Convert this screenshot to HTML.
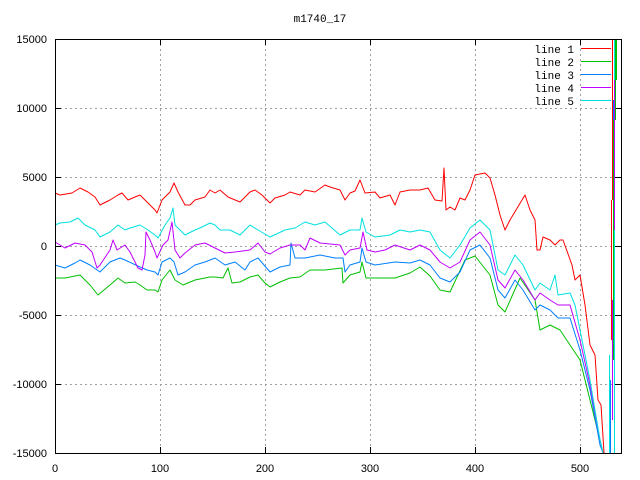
<!DOCTYPE html>
<html><head><meta charset="utf-8"><style>
html,body{margin:0;padding:0;background:#fff;}
svg{display:block}
text{font-family:"Liberation Sans",sans-serif;font-size:11px;fill:#000}
.m{font-family:"Liberation Mono",monospace;font-size:11px}
</style></head><body>
<svg width="640" height="480" viewBox="0 0 640 480" xmlns="http://www.w3.org/2000/svg">
<rect width="640" height="480" fill="#fff"/>
<g stroke="#a0a0a0" stroke-width="1" stroke-dasharray="2,3" fill="none">
<path d="M160.5 39V453M265.5 39V453M370.5 39V453M475.5 39V453M580.5 39V453"/>
<path d="M55 108.5H611M55 177.5H621M55 246.5H621M55 315.5H621M55 384.5H621"/>
</g>
<g stroke="#000" stroke-width="1">
<path d="M55 108.5h6M55 177.5h6M55 246.5h6M55 315.5h6M55 384.5h6M621 108.5h-6M621 177.5h-6M621 246.5h-6M621 315.5h-6M621 384.5h-6"/>
<path d="M160.5 453v-6M265.5 453v-6M370.5 453v-6M475.5 453v-6M580.5 453v-6M160.5 39v6M265.5 39v6M370.5 39v6M475.5 39v6M580.5 39v6"/>
</g>
<g fill="none" stroke-width="1" stroke-linejoin="round">
<polyline stroke="#00c000" points="55,278 65,278 80,275 90,285 98,295 110,285 118,278 125,283 135,282 140,285 147,290 155,290 158,292 162,280 170,270 175,280 183,285 195,280 210,277 215,277 223,278 228,268 232,283 240,282 250,277 258,275 265,283 270,287 280,282 290,278 300,277 310,270 325,270 342,268 343,283 350,275 360,272 362,262 366,278 375,278 395,278 410,273 420,267 430,276 440,290 450,292 465,260 475,256 490,275 498,305 505,312 520,278 535,300 540,330 550,325 560,330 570,345 580,360 590,400 600,440 603,453"/>
<polyline stroke="#0080ff" points="55,265 65,268 75,263 80,260 90,265 100,272 110,262 120,258 125,260 140,267 147,270 155,272 158,275 162,262 170,258 174,262 178,275 185,272 195,265 205,262 215,258 225,265 235,262 245,270 250,262 258,258 270,272 280,267 290,265 291,243 295,258 305,258 320,255 335,258 343,258 345,272 350,265 360,262 362,248 366,262 375,265 395,262 410,263 420,260 430,265 440,278 450,282 460,272 470,250 480,245 490,258 498,290 505,298 515,280 523,290 535,310 540,305 550,310 558,318 570,318 580,350 590,390 600,445 603,453"/>
<polyline stroke="#c000ff" points="55,242 65,248 75,243 85,245 92,252 97,268 100,265 110,250 113,240 117,250 125,245 130,252 134,260 138,268 142,270 145,255 146,232 150,240 155,252 157,258 163,245 168,240 172,222 175,250 180,258 185,253 195,245 205,243 215,248 225,253 235,252 250,250 258,243 265,252 270,254 280,248 290,245 300,245 305,250 310,238 320,243 340,245 345,255 350,250 360,248 363,232 367,250 375,252 385,250 395,245 410,250 420,245 430,250 440,262 450,268 460,262 470,240 480,232 490,245 498,280 505,288 515,270 523,280 535,300 540,293 550,300 558,305 570,305 580,340 590,385 600,440 603,453"/>
<polyline stroke="#00e0e0" points="55,225 60,223 70,222 78,218 85,225 95,230 100,237 110,232 118,225 125,230 130,228 140,225 148,230 155,235 158,238 165,225 170,218 173,208 175,225 185,235 195,230 200,228 210,223 215,225 220,230 230,230 240,235 250,225 258,230 270,237 285,230 295,228 305,222 315,225 325,222 340,235 350,230 360,230 362,218 366,232 375,237 390,235 400,230 410,232 420,230 430,232 440,250 450,258 460,245 470,228 480,220 490,230 498,270 505,275 515,255 523,265 535,290 540,283 550,290 555,275 558,295 570,293 575,305 585,355 590,380 600,440 603,453"/>
<polyline stroke="#ff0000" points="55,193 60,195 72,193 80,188 88,192 95,197 100,205 110,200 118,195 122,193 128,200 135,197 140,195 145,200 155,210 157,213 162,200 170,192 174,183 178,192 185,205 190,205 195,200 205,197 210,190 215,193 220,190 228,197 240,202 250,192 255,190 262,195 270,203 275,198 285,195 290,192 300,195 305,190 315,192 325,185 330,187 340,190 345,200 350,193 355,191 360,180 365,193 375,192 380,198 390,195 395,205 400,192 410,190 420,190 428,188 435,200 442,201 444,168 446,210 450,207 455,210 460,198 465,200 470,190 475,175 485,173 490,178 495,195 500,215 505,230 510,220 525,195 530,210 535,220 537,250 540,250 543,237 550,240 555,245 560,240 563,240 572,265 575,280 580,275 585,305 590,345 595,355 598,400 601,405 604,453"/>
<path stroke="#00e0e0" d="M609.5 453V355M614.5 453V39"/>
<path stroke="#0080ff" d="M610.5 453V380M613.5 300V100"/>
<path stroke="#ff0000" d="M611.5 340V200M612.5 200V39"/>
<path stroke="#c000ff" d="M612.5 420V300M614.5 230V80"/>
<path stroke="#00c000" d="M613.5 360V120M615.5 120V39M616.5 80V39"/>
</g>
<rect x="55.5" y="39.5" width="566" height="414" fill="none" stroke="#000" stroke-width="1"/>
<text x="320" y="22" text-anchor="middle" class="m">m1740_17</text>
<g text-anchor="end">
<text x="47" y="43">15000</text><text x="47" y="112">10000</text><text x="47" y="181">5000</text><text x="47" y="250">0</text><text x="47" y="319">-5000</text><text x="47" y="388">-10000</text><text x="47" y="457">-15000</text>
</g>
<g text-anchor="middle">
<text x="55" y="472">0</text><text x="160" y="472">100</text><text x="265" y="472">200</text><text x="370" y="472">300</text><text x="475" y="472">400</text><text x="580" y="472">500</text>
</g>
<g text-anchor="end">
<text x="574" y="53" class="m">line 1</text><text x="574" y="66" class="m">line 2</text><text x="574" y="79" class="m">line 3</text><text x="574" y="92" class="m">line 4</text><text x="574" y="105" class="m">line 5</text>
</g>
<g stroke-width="1">
<path stroke="#ff0000" d="M581 48.5h30"/><path stroke="#00c000" d="M581 61.5h30"/><path stroke="#0080ff" d="M581 74.5h30"/><path stroke="#c000ff" d="M581 87.5h30"/><path stroke="#00e0e0" d="M581 100.5h30"/>
</g>
</svg>
</body></html>
